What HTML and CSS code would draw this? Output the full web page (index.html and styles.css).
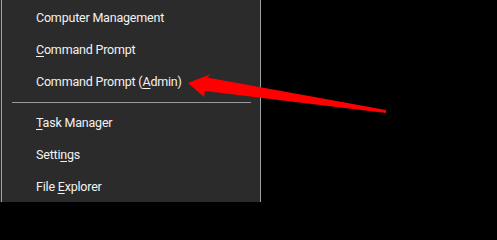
FILE: index.html
```html
<!DOCTYPE html>
<html>
<head>
<meta charset="utf-8">
<link rel="stylesheet" href="styles.css">
</head>
<body>
<div class="screen">
  <div class="menu">
    <ul class="list">
      <li class="item">Computer Management</li>
      <li class="item"><u>C</u>ommand Prompt</li>
      <li class="item">Command Prompt (<u>A</u>dmin)</li>
      <li class="sep"></li>
      <li class="item"><u>T</u>ask Manager</li>
      <li class="item">Setti<u>n</u>gs</li>
      <li class="item">File <u>E</u>xplorer</li>
    </ul>
  </div>
  <svg class="arrow" width="497" height="202" viewBox="0 0 497 202">
    <polygon points="188,83 211,74 207,77.5 386,110 386,113 205,91 204,97" fill="#ff0000"/>
  </svg>
</div>
</body>
</html>
```
FILE: styles.css
```css
html, body {
  margin: 0;
  padding: 0;
  background: #000;
}
.screen {
  position: relative;
  width: 497px;
  height: 202px;
  overflow: hidden;
  background: #000;
}
.menu {
  width: 259px;
  height: 202px;
  padding-left: 1px;
  border-right: 1px solid #a0a0a0;
  background: #2b2b2b;
}
.list {
  list-style: none;
  margin: 0;
  padding: 2px 0 0 0;
  height: 200px;
  border-left: 1px solid #a0a0a0;
  font-family: Roboto, "Noto Sans", sans-serif;
  font-size: 12.5px;
  letter-spacing: -0.2px;
  color: #f2f2f2;
}
.item {
  height: 32px;
  line-height: 32px;
  padding-left: 34px;
  white-space: nowrap;
}
.item u {
  text-underline-offset: 2px;
}
.sep {
  height: 1px;
  margin: 4px 9px 4px 10px;
  background: #9a9a9a;
}
.arrow {
  position: absolute;
  left: 0;
  top: 0;
}
```
